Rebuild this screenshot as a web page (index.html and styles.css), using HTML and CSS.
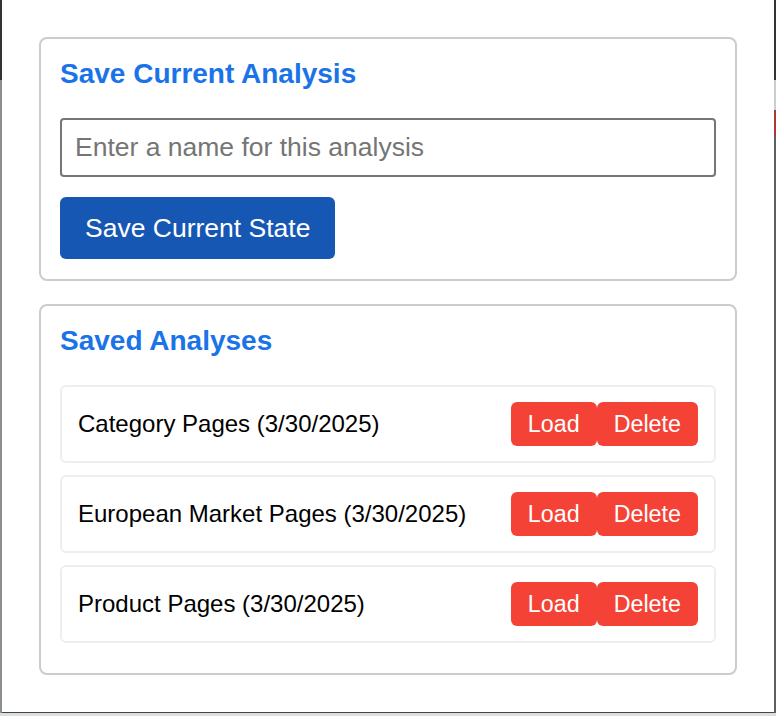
FILE: index.html
```html
<!DOCTYPE html>
<html lang="en">
<head>
<meta charset="utf-8">
<title>Saved Analyses</title>
<link rel="stylesheet" href="styles.css">
</head>
<body>
<div class="frame">
  <span class="edge edge-left"></span>
  <span class="edge edge-right"></span>
  <section class="card card-save">
    <h2 class="card-title">Save Current Analysis</h2>
    <input class="name-input" type="text" placeholder="Enter a name for this analysis">
    <div class="actions">
      <button class="btn-primary" type="button">Save Current State</button>
    </div>
  </section>
  <section class="card card-list">
    <h2 class="card-title">Saved Analyses</h2>
    <ul class="list">
      <li class="item">
        <span class="item-name">Category Pages (3/30/2025)</span>
        <span class="item-actions"><button class="btn-danger" type="button">Load</button><button class="btn-danger" type="button">Delete</button></span>
      </li>
      <li class="item">
        <span class="item-name">European Market Pages (3/30/2025)</span>
        <span class="item-actions"><button class="btn-danger" type="button">Load</button><button class="btn-danger" type="button">Delete</button></span>
      </li>
      <li class="item">
        <span class="item-name">Product Pages (3/30/2025)</span>
        <span class="item-actions"><button class="btn-danger" type="button">Load</button><button class="btn-danger" type="button">Delete</button></span>
      </li>
    </ul>
  </section>
</div>
</body>
</html>
```

FILE: styles.css
```css
* { box-sizing: border-box; }

html, body {
  margin: 0;
  padding: 0;
}

body {
  width: 776px;
  height: 716px;
  overflow: hidden;
  background: #dcdede;
  font-family: "Liberation Sans", Arial, Helvetica, sans-serif;
  color: #000;
}

.frame {
  position: relative;
  width: 776px;
  height: 713px;
  background: #fff;
  border-bottom: 1px solid #3f4545;
  padding: 37px 39px 0 39px;
}

.edge {
  position: absolute;
  top: 0;
  width: 2px;
  height: 713px;
}

.edge-left {
  left: 0;
  background: linear-gradient(to bottom, #2f3535 0, #2f3535 80px, #8a9090 80px, #8a9090 100%);
  width: 1.5px;
}

.edge-right {
  right: 0;
  background: linear-gradient(to bottom,
    #2f3535 0, #2f3535 80px,
    #c9cfcf 80px, #c9cfcf 110px,
    #a83a34 110px, #a83a34 136px,
    #5c6262 136px, #5c6262 100%);
}

.card {
  border: 2px solid #cccccc;
  border-radius: 8px;
  background: #fff;
  padding: 19px 19px 20px 19px;
}

.card-list {
  margin-top: 23px;
}

.card-title {
  margin: 0 0 28px 0;
  font-size: 28px;
  line-height: 32px;
  font-weight: bold;
  color: #1a73e8;
}

.name-input {
  display: block;
  width: 100%;
  height: 59px;
  margin: 0;
  padding: 0 13px;
  border: 2px solid #767676;
  border-radius: 4px;
  font-family: "Liberation Sans", Arial, sans-serif;
  font-size: 26.5px;
  color: #333;
  background: #fff;
  outline: none;
}

.name-input::placeholder {
  color: #757575;
}

.actions {
  margin-top: 20px;
  display: flex;
}

.btn-primary {
  height: 62px;
  padding: 0 25px;
  border: none;
  border-radius: 6px;
  background: #1757b4;
  color: #fff;
  font-family: "Liberation Sans", Arial, sans-serif;
  font-size: 26.5px;
  cursor: pointer;
}

.list {
  list-style: none;
  margin: 0;
  padding: 0 0 10px 0;
  display: flex;
  flex-direction: column;
  gap: 12px;
}

.item {
  display: flex;
  align-items: center;
  justify-content: space-between;
  border: 2px solid #eeeeee;
  border-radius: 6px;
  padding: 15px 16px;
}

.item-name {
  font-size: 24px;
  line-height: 28px;
}

.item-actions {
  display: flex;
}

.btn-danger {
  height: 44px;
  padding: 0 17px;
  border: none;
  border-radius: 6px;
  background: #f44336;
  color: #fff;
  font-family: "Liberation Sans", Arial, sans-serif;
  font-size: 23.3px;
  cursor: pointer;
}
```
